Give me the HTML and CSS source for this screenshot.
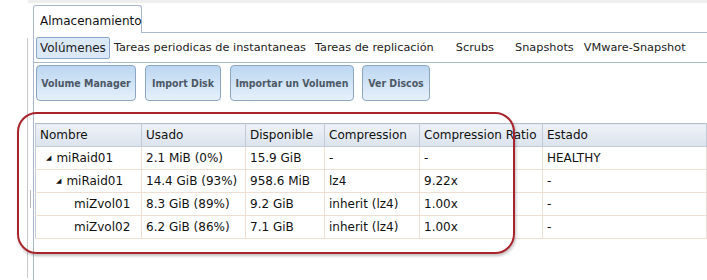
FILE: index.html
```html
<!DOCTYPE html>
<html lang="es">
<head>
  <meta charset="UTF-8" />
  <title>Almacenamiento</title>
  <link rel="stylesheet" href="styles.css">
</head>
<body>
  <div class="topbar"></div>

  <div class="layout">
    <div class="sidebar">
      <div class="splitter"></div>
    </div>

    <div class="main">
      <div class="tabstrip">
        <div class="tab">Almacenamiento</div>
      </div>

      <div class="panel">
        <div class="subtabs">
          <span class="subtab active">Volúmenes</span>
          <span class="subtab s-periodic">Tareas periodicas de instantaneas</span>
          <span class="subtab s-repl">Tareas de replicación</span>
          <span class="subtab s-scrub">Scrubs</span>
          <span class="subtab s-snap">Snapshots</span>
          <span class="subtab s-vmware">VMware-Snapshot</span>
        </div>

        <div class="toolbar">
          <button class="btn b-manager">Volume Manager</button>
          <button class="btn b-import">Import Disk</button>
          <button class="btn b-volume">Importar un Volumen</button>
          <button class="btn b-disks">Ver Discos</button>
        </div>

        <div class="grid-wrap">
          <table class="grid">
            <thead>
              <tr>
                <th class="c-name">Nombre</th>
                <th class="c-used">Usado</th>
                <th class="c-avail">Disponible</th>
                <th class="c-comp">Compression</th>
                <th class="c-ratio">Compression Ratio</th>
                <th>Estado</th>
              </tr>
            </thead>
            <tbody>
              <tr>
                <td><span class="tree lvl0"><span class="arrow">◢</span>miRaid01</span></td>
                <td>2.1 MiB (0%)</td>
                <td>15.9 GiB</td>
                <td>-</td>
                <td>-</td>
                <td>HEALTHY</td>
              </tr>
              <tr>
                <td><span class="tree lvl1"><span class="arrow">◢</span>miRaid01</span></td>
                <td>14.4 GiB (93%)</td>
                <td>958.6 MiB</td>
                <td>lz4</td>
                <td>9.22x</td>
                <td>-</td>
              </tr>
              <tr>
                <td><span class="tree lvl2">miZvol01</span></td>
                <td>8.3 GiB (89%)</td>
                <td>9.2 GiB</td>
                <td>inherit (lz4)</td>
                <td>1.00x</td>
                <td>-</td>
              </tr>
              <tr>
                <td><span class="tree lvl2">miZvol02</span></td>
                <td>6.2 GiB (86%)</td>
                <td>7.1 GiB</td>
                <td>inherit (lz4)</td>
                <td>1.00x</td>
                <td>-</td>
              </tr>
            </tbody>
          </table>
          <div class="callout"></div>
        </div>
      </div>
    </div>
  </div>
</body>
</html>
```

FILE: styles.css
```css
body {
  margin: 0;
  background: #fff;
  font-family: "DejaVu Sans", Verdana, sans-serif;
  font-size: 11px;
  color: #222;
  overflow: hidden;
}

.topbar {
  margin-left: 28px;
  height: 3px;
  background-color: #eeeeee;
}

.layout {
  display: flex;
}

.sidebar {
  width: 27px;
  margin-top: 35px;
  height: 240px;
  border-right: 1px solid #c8c8c8;
  position: relative;
}

/* little drag handle on the splitter */
.splitter {
  position: absolute;
  left: 30px;
  top: 152px;
  width: 1px;
  height: 18px;
  background-color: #b8b8b8;
}

.main {
  flex: 1;
  margin-left: 5px;
}

.tabstrip {
  height: 29px;
  border-bottom: 1px solid #a9b8cc;
  display: flex;
  align-items: flex-end;
}

.tab {
  width: 109px;
  height: 28px;
  margin-bottom: -1px;
  border: 1px solid #a9b8cc;
  border-bottom: none;
  border-radius: 3px 3px 0 0;
  background-color: #fff;
  box-sizing: border-box;
  padding: 8px 0 0 6px;
  font-size: 12px;
  color: #111;
}

.panel {
  border-left: 1px solid #a9b8cc;
  height: 250px;
}

.subtabs {
  height: 29px;
  border-bottom: 1px solid #a9b8cc;
  display: flex;
  align-items: center;
  padding-left: 2px;
  font-size: 11.3px;
  color: #222;
  white-space: nowrap;
}

.subtab.active {
  padding: 3px 3px;
  background-color: #dbe8f7;
  border: 1px solid #8aa8cc;
  border-radius: 2px;
  font-size: 12px;
}

.s-periodic { margin-left: 4px; }
.s-repl { margin-left: 9px; }
.s-scrub { margin-left: 22px; }
.s-snap { margin-left: 21px; }
.s-vmware { margin-left: 10px; }

.toolbar {
  display: flex;
  gap: 9px;
  padding: 2px 0 0 2px;
}

.btn {
  height: 36px;
  padding: 0;
  border: 1px solid #8ca6c2;
  border-radius: 4px;
  background: linear-gradient(#bcd7f1, #e6f0fb);
  font-family: "DejaVu Sans Condensed", "DejaVu Sans", sans-serif;
  font-size: 10.5px;
  font-weight: bold;
  color: #4d5866;
}

.b-manager { width: 100px; }
.b-import { width: 76px; }
.b-volume { width: 124px; }
.b-disks { width: 68px; margin-left: -1px; }

.grid-wrap {
  position: relative;
  margin-top: 22px;
  padding-left: 1px;
}

.grid {
  border-collapse: collapse;
  width: 672px;
  font-size: 12px;
  color: #111;
}

.grid th {
  height: 22px;
  text-align: left;
  font-weight: normal;
  padding: 0 4px;
  background: linear-gradient(#eef2f7, #dbe3ed);
  border: 1px solid #c2cbd6;
  border-top-color: #b5bec9;
}

.grid td {
  height: 22px;
  padding: 0 4px;
  border: 1px solid #efdfd2;
  border-top: none;
  white-space: nowrap;
}

.grid td:first-child {
  border-left-color: #c2cbd6;
}

.c-name { width: 97px; }
.c-used { width: 95px; }
.c-avail { width: 70px; }
.c-comp { width: 86px; }
.c-ratio { width: 114px; }

.tree {
  display: inline-block;
}

.arrow {
  font-size: 7px;
  margin-right: 5px;
  vertical-align: 2px;
}

.tree.lvl0 { padding-left: 6px; }
.tree.lvl1 { padding-left: 16px; }
.tree.lvl2 { padding-left: 34px; }

/* red annotation drawn over the grid */
.callout {
  position: absolute;
  left: -17px;
  top: -11px;
  width: 494px;
  height: 138px;
  border: 2px solid #a8232b;
  border-radius: 20px;
  box-shadow: 1px 2px 3px rgba(0, 0, 0, 0.25);
  pointer-events: none;
}
```
